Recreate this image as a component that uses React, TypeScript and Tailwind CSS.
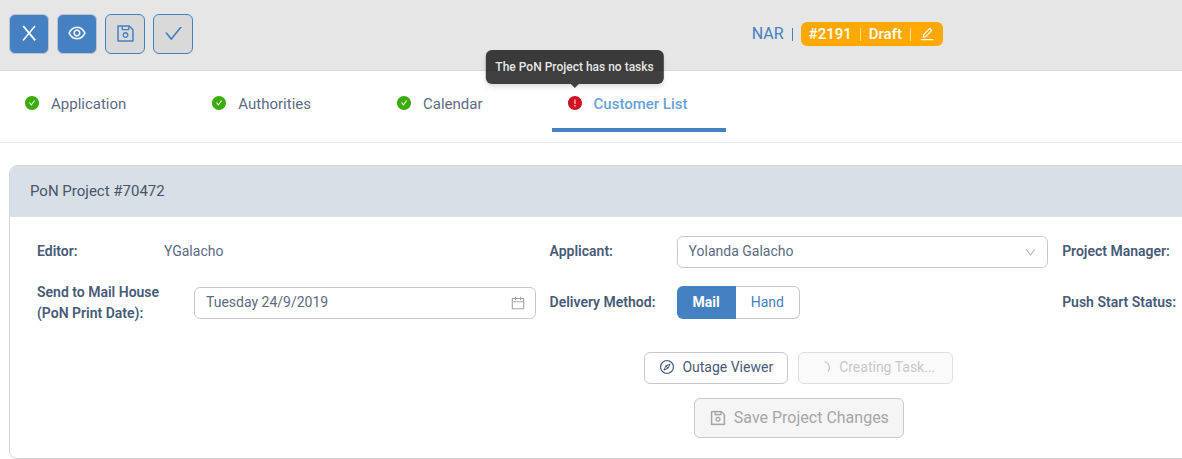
import React from "react";
import {
  AiFillCheckCircle,
  AiFillExclamationCircle,
  AiOutlineCalendar,
  AiOutlineCheck,
  AiOutlineCompass,
  AiOutlineDown,
  AiOutlineEdit,
  AiOutlineEye,
  AiOutlineSave,
} from "react-icons/ai";

const solidTool =
  "flex h-10 w-10 items-center justify-center rounded-md border border-[#bfc4ca] bg-[#4480c2] pb-0.5 text-white";
const outlineTool =
  "flex h-10 w-10 items-center justify-center rounded-md border border-[#4480c2] bg-[#d9d9d9] pb-0.5 text-[#4480c2]";

function Toolbar() {
  return (
    <header className="flex h-[71px] items-start border-b border-[#d9d9d9] bg-[#e6e6e6] pt-3.5">
      <div className="flex w-[63.6%] gap-2 pl-[9px]">
        <button type="button" aria-label="Close" className={solidTool}>
          <svg width="20" height="20" viewBox="0 0 20 20" fill="none" stroke="currentColor" aria-hidden="true">
            <path d="M4.2 3L16.2 17.4" strokeWidth="1.9" />
            <path d="M16 3L4 17.4" strokeWidth="1.5" />
          </svg>
        </button>
        <button type="button" aria-label="Preview" className={solidTool}>
          <AiOutlineEye size={20} stroke="currentColor" strokeWidth={14} />
        </button>
        <button type="button" aria-label="Save" className={outlineTool}>
          <AiOutlineSave size={21} />
        </button>
        <button type="button" aria-label="Approve" className={outlineTool}>
          <AiOutlineCheck size={21} />
        </button>
      </div>
      <div className="mt-2 flex h-6 items-center gap-2 text-base text-[#4480c2]">
        <a href="#nar">NAR</a>
        <span className="h-[13px] w-px bg-[#4480c2]" />
        <div className="flex h-6 items-center gap-2 rounded-md bg-[#ffa800] px-2 text-[15px] font-medium text-white">
          <span>#2191</span>
          <span className="h-[13px] w-px bg-[#ffdc99]" />
          <span>Draft</span>
          <span className="h-[13px] w-px bg-[#ffdc99]" />
          <button type="button" aria-label="Edit">
            <AiOutlineEdit size={16} />
          </button>
        </div>
      </div>
    </header>
  );
}

function Tabs() {
  return (
    <nav className="flex h-[72px] items-start gap-[31px] border-b border-[#e8e8e8] pl-2 text-[15px] text-[#5c6b84]">
      {["Application", "Authorities", "Calendar"].map((name) => (
        <a key={name} href="#tab" className="flex h-[61px] items-center gap-[11px] pt-0.5 pr-[38px] pl-4">
          <AiFillCheckCircle size={16} className="text-[#3cab0c]" />
          <span className="pt-1">{name}</span>
        </a>
      ))}
      <a
        href="#tab"
        aria-current="page"
        className="flex h-[61px] items-center gap-[11px] border-b-4 border-[#4480c2] pt-1.5 pr-[38px] pl-[15px] font-medium text-[#6aa2d8]"
      >
        <span className="relative">
          <AiFillExclamationCircle size={16} className="text-[#cf1322]" />
          <span
            role="tooltip"
            className="absolute bottom-full left-1/2 mb-[11px] -translate-x-1/2 rounded-md bg-black/75 px-2.5 py-2 text-xs leading-[18px] font-medium whitespace-nowrap text-[#e6e6e6] shadow-md"
          >
            The PoN Project has no tasks
            <svg width="8" height="4" viewBox="0 0 8 4" className="absolute top-full left-1/2 -translate-x-1/2" aria-hidden="true">
              <path d="M0 0H8L4 4Z" fill="#404040" />
            </svg>
          </span>
        </span>
        <span className="pt-1">Customer List</span>
      </a>
    </nav>
  );
}

const label = "w-[127px] shrink-0 font-semibold text-[#475b78]";

function ProjectCard() {
  return (
    <section className="mx-[9px] mt-[22px] rounded-lg border border-[#d4d6d9] text-sm text-[#5c6b84]">
      <h2 className="rounded-t-lg border-b border-[#dfe1e4] bg-[#d8dfe7] px-5 py-[13px] text-[15px] leading-6 text-[#475569]">
        PoN Project #70472
      </h2>
      <div className="pt-[19px] pr-[25px] pb-5 pl-[27px]">
        <div className="grid grid-cols-3 gap-x-3.5 gap-y-3.5">
          <div className="flex h-8 items-center pb-0.5">
            <span className={label}>Editor:</span>
            <span>YGalacho</span>
          </div>
          <div className="flex h-8 items-center">
            <label htmlFor="applicant" className={`${label} pb-0.5`}>Applicant:</label>
            <div className="relative flex-1">
              <select id="applicant" className="block h-8 w-full appearance-none rounded-md border border-[#c9c9c9] bg-white px-[11px] pb-0.5">
                <option>Yolanda Galacho</option>
              </select>
              <AiOutlineDown size={13} className="pointer-events-none absolute top-2.5 right-[11px] text-[#b5b5b5]" />
            </div>
          </div>
          <div className="flex h-8 items-center pb-0.5">
            <span className={label}>Project Manager:</span>
          </div>
          <div className="flex items-center">
            <label htmlFor="print-date" className="w-[157px] shrink-0 leading-[21px] font-semibold text-[#475b78]">
              Send to Mail House
              <br />
              (PoN Print Date):
            </label>
            <div className="relative flex-1">
              <input
                id="print-date"
                type="text"
                defaultValue="Tuesday 24/9/2019"
                className="block h-8 w-full rounded-md border border-[#c9c9c9] px-[11px] pb-0.5"
              />
              <AiOutlineCalendar size={16} className="pointer-events-none absolute top-2 right-2.5 text-[#a6a6a6]" />
            </div>
          </div>
          <div className="flex items-center pb-0.5">
            <span className={label}>Delivery Method:</span>
            <div role="group" aria-label="Delivery Method" className="flex">
              <button type="button" aria-pressed="true" className="h-[33px] rounded-l-md bg-[#4480c2] px-4 font-bold text-white">
                Mail
              </button>
              <button
                type="button"
                aria-pressed="false"
                className="h-[33px] rounded-r-md border border-l-0 border-[#c9c9c9] px-[15px] text-[#4480c2]"
              >
                Hand
              </button>
            </div>
          </div>
          <div className="flex items-center pb-0.5">
            <span className={label}>Push Start Status:</span>
          </div>
        </div>
        <div className="mt-7 flex justify-center gap-2.5">
          <button type="button" className="flex h-8 items-center gap-[7px] rounded-md border border-[#c9c9c9] px-3.5 pb-0.5 text-[#475b78]">
            <AiOutlineCompass size={16} />
            Outage Viewer
          </button>
          <button
            type="button"
            disabled
            className="flex h-8 items-center gap-2 rounded-md border border-[#dedede] bg-[#fafafa] pr-[17px] pb-0.5 pl-[18px] text-[#c8c8c8]"
          >
            <svg width="14" height="14" viewBox="0 0 14 14" fill="none" stroke="currentColor" aria-hidden="true">
              <path d="M8 1.8A6 6 0 0 1 11.3 11.2" strokeLinecap="round" strokeWidth="1.2" />
            </svg>
            Creating Task...
          </button>
        </div>
        <div className="mt-3.5 flex justify-center">
          <button
            type="button"
            disabled
            className="flex h-10 items-center gap-[7px] rounded-md border border-[#c9c9c9] bg-[#f5f5f5] px-3.5 text-base text-[#a6a6a6]"
          >
            <AiOutlineSave size={18} stroke="currentColor" strokeWidth={14} />
            Save Project Changes
          </button>
        </div>
      </div>
    </section>
  );
}

export default function App() {
  return (
    <div className="overflow-hidden bg-white font-['Roboto',sans-serif]">
      <Toolbar />
      <Tabs />
      <main className="w-[135%]">
        <ProjectCard />
      </main>
    </div>
  );
}
